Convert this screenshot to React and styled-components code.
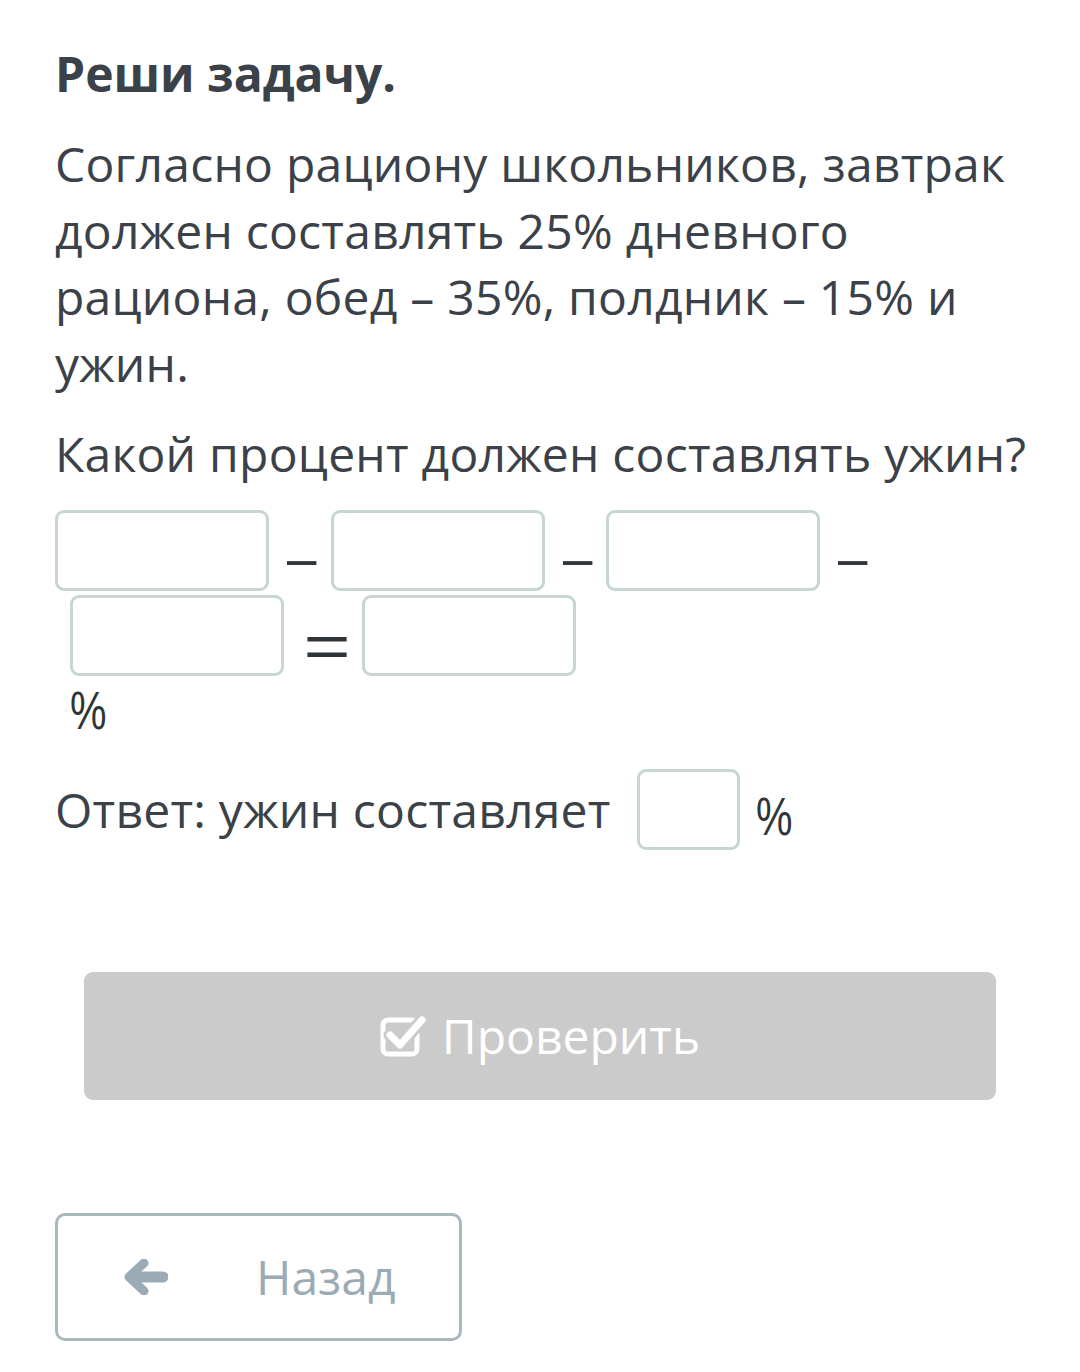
import React from "react";
import styled, { createGlobalStyle } from "styled-components";

const Global = createGlobalStyle`
  html, body { margin: 0; padding: 0; background: #ffffff; }
  body { font-family: "Open Sans", "Noto Sans", sans-serif; color: #3b4148; }
`;

const Page = styled.div`
  width: 1080px;
  padding: 41px 30px 0 55px;
  box-sizing: border-box;
`;

const Title = styled.h1`
  margin: 0;
  font-size: 48px;
  line-height: 66px;
  font-weight: 700;
  color: #3b4148;
`;

const Para = styled.p`
  margin: 24px 0 0;
  font-size: 48px;
  line-height: 66.5px;
  font-weight: 400;
  letter-spacing: 0.25px;
  color: #3b4148;
`;

const Equation = styled.div`
  margin-top: 22px;
  display: flex;
  flex-direction: column;
  gap: 4px;
`;

const EqRow = styled.div`
  display: flex;
  align-items: center;
  padding-left: ${(p) => p.$indent || 0}px;
`;

const Box = styled.div`
  width: ${(p) => p.$w || 214}px;
  height: ${(p) => p.$h || 81}px;
  box-sizing: border-box;
  border: 3px solid #c8d5d5;
  border-radius: 9px;
  background: #fff;
  flex: none;
`;

const Op = styled.span`
  display: inline-block;
  font-family: "Liberation Sans", Arial, sans-serif;
  font-size: ${(p) => p.$size || 54}px;
  line-height: 1;
  color: #2f3439;
  padding-top: ${(p) => p.$drop || 24}px;
  margin: 0 ${(p) => p.$right || 13}px 0 ${(p) => p.$left || 17}px;
  transform: scaleX(${(p) => p.$sx || 1.12});
`;

const Percent = styled.span`
  display: inline-block;
  font-family: "Liberation Sans", Arial, sans-serif;
  font-size: 54px;
  line-height: 1;
  color: #2f3439;
  transform: scaleX(0.76);
  transform-origin: left center;
`;

const PercentLine = styled.div`
  padding-left: 15px;
  margin-top: 6px;
  height: 48px;
`;

const AnswerRow = styled.div`
  margin-top: 38px;
  display: flex;
  align-items: center;
  font-size: 48px;
  line-height: 66px;
  letter-spacing: 0.25px;
`;

const AnswerText = styled.span`
  margin-right: 26px;
  padding-top: 2px;
`;

const AnswerPercent = styled(Percent)`
  margin-left: 16px;
  padding-top: 14px;
`;

const CheckButton = styled.button`
  margin: 122px 0 0 29px;
  width: 912px;
  height: 128px;
  border: none;
  border-radius: 9px;
  background: #cbcbcb;
  color: #ffffff;
  display: flex;
  align-items: center;
  justify-content: center;
  gap: 16px;
  font-family: "Open Sans", "Noto Sans", sans-serif;
  font-size: 48px;
  padding: 0;
`;

const BackButton = styled.button`
  margin-top: 113px;
  width: 407px;
  height: 128px;
  box-sizing: border-box;
  border: 3px solid #a9b7be;
  border-radius: 10px;
  background: #fff;
  display: flex;
  align-items: center;
  padding: 0 0 0 66px;
  color: #9aabb5;
  font-family: "Open Sans", "Noto Sans", sans-serif;
  font-size: 48px;
`;

const BackLabel = styled.span`
  margin-left: 88px;
`;

const CheckIcon = () => (
  <svg width="46" height="44" viewBox="0 0 46 44">
    <rect x="3" y="6" width="34" height="34" rx="5" fill="none" stroke="#fff" strokeWidth="5" />
    <path d="M10 21 L20 31 L42 6" fill="none" stroke="#cbcbcb" strokeWidth="13" strokeLinecap="round" strokeLinejoin="round" />
    <path d="M10 21 L20 31 L42 6" fill="none" stroke="#fff" strokeWidth="7" strokeLinecap="round" strokeLinejoin="round" />
  </svg>
);

const ArrowIcon = () => (
  <svg width="44" height="36" viewBox="0 0 44 36">
    <path d="M20 4 L5 18 L20 32" fill="none" stroke="#9aabb5" strokeWidth="9" strokeLinecap="round" strokeLinejoin="round" />
    <path d="M8 18 H39" fill="none" stroke="#9aabb5" strokeWidth="11" strokeLinecap="round" />
  </svg>
);

export default function App() {
  return (
    <>
      <Global />
      <Page>
        <Title>Реши задачу.</Title>
        <Para>
          Согласно рациону школьников, завтрак должен составлять 25% дневного
          рациона, обед – 35%, полдник – 15% и ужин.
        </Para>
        <Para>Какой процент должен составлять ужин?</Para>
        <Equation>
          <EqRow>
            <Box />
            <Op>−</Op>
            <Box />
            <Op>−</Op>
            <Box />
            <Op>−</Op>
          </EqRow>
          <EqRow $indent={15}>
            <Box />
            <Op $size={62} $drop={20} $left={25} $right={17} $sx={1.3}>=</Op>
            <Box />
          </EqRow>
        </Equation>
        <PercentLine>
          <Percent>%</Percent>
        </PercentLine>
        <AnswerRow>
          <AnswerText>Ответ: ужин составляет</AnswerText>
          <Box $w={103} $h={81} />
          <AnswerPercent>%</AnswerPercent>
        </AnswerRow>
        <CheckButton>
          <CheckIcon />
          <span>Проверить</span>
        </CheckButton>
        <BackButton>
          <ArrowIcon />
          <BackLabel>Назад</BackLabel>
        </BackButton>
      </Page>
    </>
  );
}
